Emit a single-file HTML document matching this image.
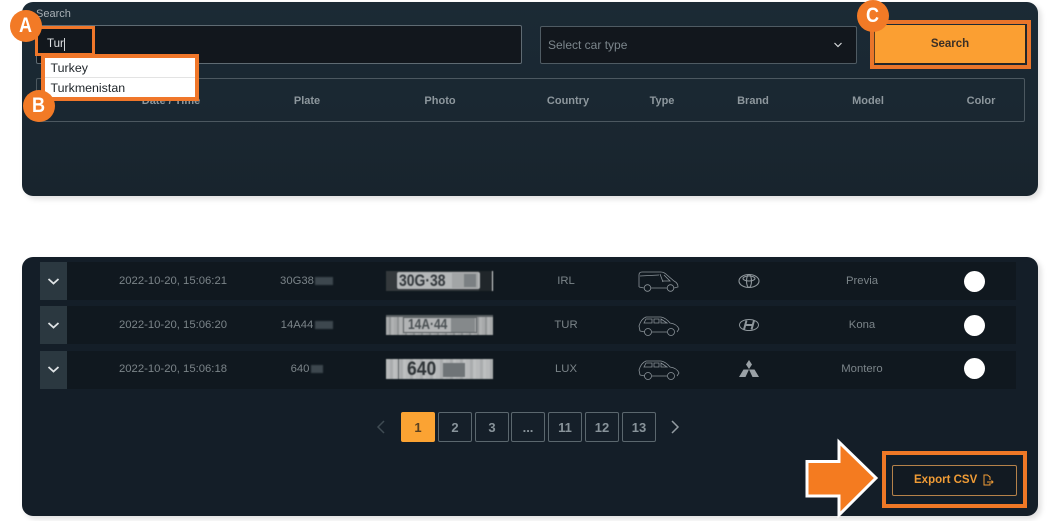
<!DOCTYPE html>
<html><head><meta charset="utf-8">
<style>
*{box-sizing:border-box;margin:0;padding:0}
html,body{width:1057px;height:521px;background:#fff;overflow:hidden;font-family:"Liberation Sans",sans-serif}
.a{position:absolute}
.panel{left:22px;width:1016px;border-radius:11px;box-shadow:3px 3px 6px rgba(0,0,0,.13)}
.th{position:absolute;top:94.500px;font-size:11px;font-weight:bold;color:#8d979d;transform:translateX(-50%);white-space:nowrap}
.row{position:absolute;left:40px;width:976px;height:38px;background:#10181f}
.chev{position:absolute;left:40px;width:27px;height:38px;background:#2b3840}
.t{position:absolute;font-size:11.300px;color:#7b8489;transform:translateX(-50%);white-space:nowrap}
.dot{position:absolute;left:964px;width:21px;height:21px;border-radius:50%;background:#fff}
.pg{position:absolute;top:412px;width:34px;height:30px;border:1px solid #5b676e;border-radius:2px;color:#88939a;font-size:13px;font-weight:bold;text-align:center;line-height:29px;background:#151f29}
.circle{position:absolute;width:32px;height:32px;border-radius:50%;background:#f27a26;color:#fff;font-weight:bold;font-size:21px;text-align:center;line-height:32px}
.circle span{display:inline-block;transform:scaleX(.86)}
.plate{position:absolute;left:386px;width:107px;height:20px;overflow:hidden;filter:blur(.6px)}
.plate div{position:absolute}
.plate .tx{font-weight:bold;white-space:nowrap;transform-origin:0 0}
.blur{position:absolute;background:#3d474e;height:7px;filter:blur(.8px)}
.car{fill:none;stroke:#8a9298;stroke-width:.8}
</style></head><body>

<div class="a panel" style="top:2px;height:194px;background:linear-gradient(180deg,#1b2a35 0%,#1a2731 60%,#18242d 100%)"></div>
<div class="a" style="left:36px;top:8px;font-size:11px;color:#a9b0b5">Search</div>
<div class="a" style="left:36px;top:25px;width:486px;height:39px;background:#12171d;border:1px solid #5f6b73;border-radius:2px"></div>
<div class="a" style="left:540px;top:26px;width:317px;height:38px;background:#12171d;border:1px solid #4f5b63;border-radius:2px"></div>
<div class="a" style="left:548px;top:38px;font-size:12px;color:#7c868c">Select car type</div>
<svg class="a" style="left:833px;top:41px" width="10" height="8"><path d="M1.500 2 L5 5.500 L8.500 2" fill="none" stroke="#d5d8da" stroke-width="1.200"/></svg>

<div class="a" style="left:36px;top:78px;width:989px;height:44px;border:1px solid #4c5860;border-radius:2px"></div>
<div class="th" style="left:171px">Date / Time</div>
<div class="th" style="left:307px">Plate</div>
<div class="th" style="left:440px">Photo</div>
<div class="th" style="left:568px">Country</div>
<div class="th" style="left:662px">Type</div>
<div class="th" style="left:753px">Brand</div>
<div class="th" style="left:868px">Model</div>
<div class="th" style="left:981px">Color</div>

<!-- C -->
<div class="a" style="left:870px;top:20px;width:161px;height:49px;border:4px solid #e9752a"></div>
<div class="a" style="left:874px;top:25px;width:152px;height:39px;background:#fb9f32;border-right:1px solid #2a2420;border-bottom:1px solid #2a2420;border-left:1px solid #5a4020;text-align:center;line-height:38px;font-size:11.500px;font-weight:bold;color:#3b3026">Search</div>
<div class="circle" style="left:857px;top:0"><span>C</span></div>

<!-- A -->
<div class="a" style="left:35px;top:26px;width:60px;height:30px;background:#12171d;border:3.500px solid #f0772a"></div>
<div class="a" style="left:47px;top:38px;font-size:11.500px;color:#dfe2e4">Tur</div>
<div class="a" style="left:64px;top:38px;width:1px;height:13px;background:#cfd3d6"></div>
<div class="circle" style="left:10px;top:10px"><span>A</span></div>

<!-- B -->
<div class="a" style="left:41px;top:54px;width:158px;height:47px;background:#fff;border:4px solid #f0772a"></div>
<div class="a" style="left:45px;top:77px;width:150px;height:1px;background:#e3e3e3"></div>
<div class="a" style="left:50.500px;top:60.500px;font-size:12.400px;color:#1e2429">Turkey</div>
<div class="a" style="left:50.500px;top:80.500px;font-size:12.400px;color:#1e2429">Turkmenistan</div>
<div class="circle" style="left:23px;top:90px"><span>B</span></div>

<!-- Panel 2 -->
<div class="a panel" style="top:257px;height:259px;background:#141e28"></div>
<div class="row" style="top:262px"></div>
<div class="row" style="top:306px"></div>
<div class="row" style="top:351px"></div>
<div class="chev" style="top:262px"></div>
<div class="chev" style="top:306px"></div>
<div class="chev" style="top:351px"></div>
<svg class="a" style="left:40px;top:262px" width="27" height="130"><g fill="none" stroke="#dfe3e5" stroke-width="1.800"><path d="M8.500 17 L13.500 21.500 L18.500 17"/><path d="M8.500 61 L13.500 65.500 L18.500 61"/><path d="M8.500 105 L13.500 109.500 L18.500 105"/></g></svg>

<div class="t" style="left:173px;top:275px">2022-10-20, 15:06:21</div>
<div class="t" style="left:173px;top:319px">2022-10-20, 15:06:20</div>
<div class="t" style="left:173px;top:363px">2022-10-20, 15:06:18</div>
<div class="t" style="left:297px;top:275px">30G38</div><div class="blur" style="left:315px;top:277px;width:18px;height:8px"></div>
<div class="t" style="left:297px;top:319px">14A44</div><div class="blur" style="left:315px;top:321px;width:18px;height:8px"></div>
<div class="t" style="left:300px;top:363px">640</div><div class="blur" style="left:311px;top:365px;width:12px;height:8px"></div>

<!-- plate 1 -->
<div class="plate" style="top:271px;background:#34393c">
  <div style="left:106px;top:0;width:1px;height:20px;background:#e0e0e0"></div>
  <div style="left:93px;top:0;width:13px;height:20px;background:#20262a"></div>
  <div style="left:11px;top:1px;width:83px;height:17px;background:#b4b7b8;border-radius:2px"></div>
  <div style="left:66px;top:2px;width:26px;height:15px;background:#a2a5a6"></div>
  <div style="left:78px;top:3px;width:12px;height:13px;background:#7b8083"></div>
  <div class="tx" style="left:13px;top:1px;font-size:17px;line-height:18px;color:#33383c;transform:scaleX(.82)">30G·38</div>
</div>
<!-- plate 2 -->
<div class="plate" style="top:315px;background:repeating-linear-gradient(90deg,#a7a9aa 0 3px,#8f9294 3px 5px,#b0b2b3 5px 8px)">
  <div style="left:0;top:0;width:107px;height:2px;background:#5a5f62"></div>
  <div style="left:17px;top:2px;width:74px;height:16px;background:#b2b4b5;border:1px solid #5c6164"></div>
  <div style="left:65px;top:3px;width:24px;height:14px;background:#85898b"></div>
  <div class="tx" style="left:22px;top:2px;font-size:15px;line-height:16px;color:#4b5154;transform:scaleX(.8)">14A·44</div>
</div>
<!-- plate 3 -->
<div class="plate" style="top:359px;background:repeating-linear-gradient(90deg,#b7b9ba 0 4px,#a9acad 4px 7px,#bdbfc0 7px 10px)">
  <div style="left:12px;top:0;width:1px;height:20px;background:#5c6164"></div>
  <div style="left:57px;top:4px;width:22px;height:14px;background:#6f7477"></div>
  <div class="tx" style="left:21px;top:1px;font-size:19px;line-height:19px;color:#2f3437;transform:scaleX(.92)">640</div>
</div>

<div class="t" style="left:566px;top:275px">IRL</div>
<div class="t" style="left:566px;top:319px">TUR</div>
<div class="t" style="left:566px;top:363px">LUX</div>

<svg class="a car" style="left:637px;top:270px" width="44" height="22"><path d="M2 17 L2 5 Q2 2 5 2 L24 2 Q27 2 30 5 L37 11 Q41 13 41 17 L37 18 M30 18 L14 18 M7 18 L2 17"/><path d="M3 6 L22 5 M23 4 L26 12 M27 5 L33 11 L25 11"/><circle cx="10.500" cy="18" r="3.300"/><circle cx="33.500" cy="18" r="3.300"/></svg>
<svg class="a car" style="left:637px;top:314px" width="44" height="22"><path d="M3 17 L2 12 Q4 5 9 3 L24 3 Q29 4 33 9 Q40 10 42 15 L40 18 M30 18 L15 18 M8 18 L3 17"/><path d="M7 9 L9 5 L15 5 L15 9 Z M17 5 L22 5 L22 9 L17 9 Z M24 5 L30 9 L24 9 Z"/><circle cx="11" cy="18" r="3.500"/><circle cx="34" cy="18" r="3.500"/></svg>
<svg class="a car" style="left:637px;top:358px" width="44" height="22"><path d="M3 17 L2 12 Q4 5 9 3 L24 3 Q29 4 33 9 Q40 10 42 15 L40 18 M30 18 L15 18 M8 18 L3 17"/><path d="M7 9 L9 5 L15 5 L15 9 Z M17 5 L22 5 L22 9 L17 9 Z M24 5 L30 9 L24 9 Z"/><circle cx="11" cy="18" r="3.500"/><circle cx="34" cy="18" r="3.500"/></svg>

<svg class="a" style="left:737px;top:272px" width="24" height="18" fill="none" stroke="#8f979c" stroke-width="1.100"><ellipse cx="12" cy="9" rx="10" ry="6.500"/><ellipse cx="12" cy="6.500" rx="6" ry="2.500"/><ellipse cx="12" cy="9" rx="2.500" ry="6.500"/></svg>
<svg class="a" style="left:737px;top:316px" width="24" height="18"><ellipse cx="12" cy="9" rx="9.500" ry="5.500" fill="none" stroke="#8f979c" stroke-width="1"/><path d="M9.500 4.500 L7 13.500 M17 4.500 L14.500 13.500 M8 9 L16 9" stroke="#8f979c" stroke-width="2" fill="none"/></svg>
<svg class="a" style="left:737px;top:360px" width="24" height="18" fill="#9aa1a6"><path d="M12 0 L15 4.500 L12 9 L9 4.500 Z M12 9.500 L6.500 9.500 L2 17 L8.500 17 Z M12 9.500 L17.500 9.500 L22 17 L15.500 17 Z"/></svg>

<div class="t" style="left:862px;top:275px">Previa</div>
<div class="t" style="left:862px;top:319px">Kona</div>
<div class="t" style="left:862px;top:363px">Montero</div>
<div class="dot" style="top:271px"></div>
<div class="dot" style="top:315px"></div>
<div class="dot" style="top:358px"></div>

<!-- Pagination -->
<svg class="a" style="left:374px;top:419px" width="14" height="16"><path d="M10 2 L4 8 L10 14" fill="none" stroke="#3f4b53" stroke-width="1.500"/></svg>
<div class="pg" style="left:401px;background:#fba333;border-color:#fba333;color:#5a4020">1</div>
<div class="pg" style="left:438px">2</div>
<div class="pg" style="left:475px">3</div>
<div class="pg" style="left:511px">...</div>
<div class="pg" style="left:548px">11</div>
<div class="pg" style="left:585px">12</div>
<div class="pg" style="left:622px">13</div>
<svg class="a" style="left:668px;top:419px" width="14" height="16"><path d="M4 2 L10 8 L4 14" fill="none" stroke="#939ca2" stroke-width="1.500"/></svg>

<!-- Export -->
<div class="a" style="left:882px;top:451px;width:145px;height:57px;border:4px solid #ef7826"></div>
<div class="a" style="left:892px;top:465px;width:125px;height:31px;border:1px solid #b5824a;border-radius:2px;background:#121a22;color:#f09c36;font-size:11.500px;font-weight:bold;line-height:29.500px;padding-left:21px">Export CSV</div>
<svg class="a" style="left:982px;top:474px" width="14" height="13" fill="none" stroke="#f09c36" stroke-width="1"><path d="M8 6 V3 L5.500 1 H2 V11 H8 V9 M5 8 H11 M9.500 6.500 L11 8 L9.500 9.500"/></svg>
<svg class="a" style="left:800px;top:436px" width="85" height="85"><path d="M7 25.500 H39 V6 L76 42 L39 79 V60 H7 Z" fill="#f47b20" stroke="#fff" stroke-width="3"/></svg>

</body></html>
